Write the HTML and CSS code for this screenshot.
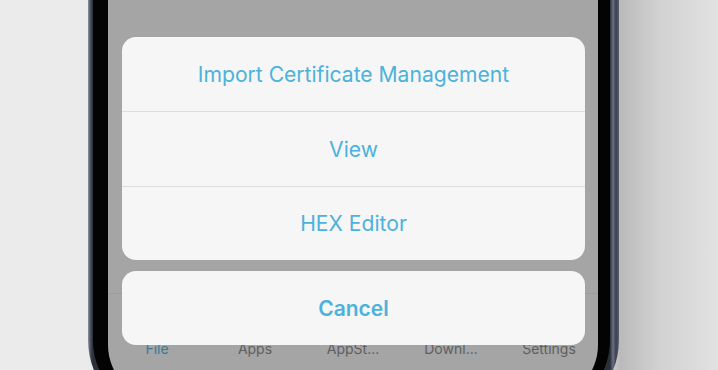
FILE: index.html
```html
<!DOCTYPE html>
<html>
<head>
<meta charset="utf-8">
<link rel="stylesheet" href="styles.css">
</head>
<body>
<div class="phone">
  <div class="bezel">
    <div class="screen">
      <div class="tabbar">
        <span class="tab active">File</span>
        <span class="tab">Apps</span>
        <span class="tab">AppSt...</span>
        <span class="tab">Downl...</span>
        <span class="tab">Settings</span>
      </div>
      <div class="sheet">
        <div class="group">
          <div class="action">Import Certificate Management</div>
          <div class="action">View</div>
          <div class="action last">HEX Editor</div>
        </div>
        <div class="cancel">Cancel</div>
      </div>
    </div>
  </div>
</div>
</body>
</html>
```

FILE: styles.css
```css
html, body {
  margin: 0;
  padding: 0;
}
body {
  width: 718px;
  height: 370px;
  overflow: hidden;
  background: linear-gradient(90deg, #ebebeb 0, #ebebeb 600px, #bababa 620px, #d2d2d2 660px, #e2e2e2 718px);
  font-family: Inter, "Liberation Sans", Arial, sans-serif;
}
.phone {
  box-sizing: border-box;
  margin: -110px 0 0 88px;
  width: 531px;
  height: 530px;
  border-radius: 80px;
  background: linear-gradient(90deg, #8a909c 0, #3e4452 3px, #2a2f3a 5px, #2a2f3a 522px, #6a7080 525px, #3a404e 528px, #5a6070 531px);
  padding: 0 9px 5px 5px;
}
.bezel {
  box-sizing: border-box;
  height: 100%;
  border-radius: 75px;
  background: #030303;
  padding: 0 12px 15px 15px;
}
.screen {
  position: relative;
  box-sizing: border-box;
  height: 100%;
  border-radius: 0 0 55px 55px;
  background: #a5a5a5;
  display: flex;
  flex-direction: column;
  justify-content: flex-end;
  overflow: hidden;
}
.tabbar {
  height: 107px;
  border-top: 1px solid #9c9c9c;
  display: grid;
  grid-template-columns: repeat(5, 1fr);
  align-items: start;
  padding-top: 46px;
  box-sizing: border-box;
}
.tab {
  text-align: center;
  font-size: 14px;
  color: #5e5f63;
}
.tab.active {
  color: #3a7a9a;
}
.sheet {
  position: absolute;
  left: 14px;
  right: 13px;
  bottom: 55px;
  display: flex;
  flex-direction: column;
  gap: 11px;
}
.group {
  background: #f6f6f6;
  border-radius: 14px;
  overflow: hidden;
}
.action {
  height: 74px;
  display: flex;
  align-items: center;
  justify-content: center;
  font-size: 21.1px;
  color: #4cb2db;
}
.action + .action {
  border-top: 1px solid #dedede;
}
.action.last {
  height: 73px;
}
.cancel {
  height: 74px;
  background: #f6f6f6;
  border-radius: 14px;
  display: flex;
  align-items: center;
  justify-content: center;
  font-size: 21px;
  font-weight: 600;
  color: #4cb2db;
}
```
